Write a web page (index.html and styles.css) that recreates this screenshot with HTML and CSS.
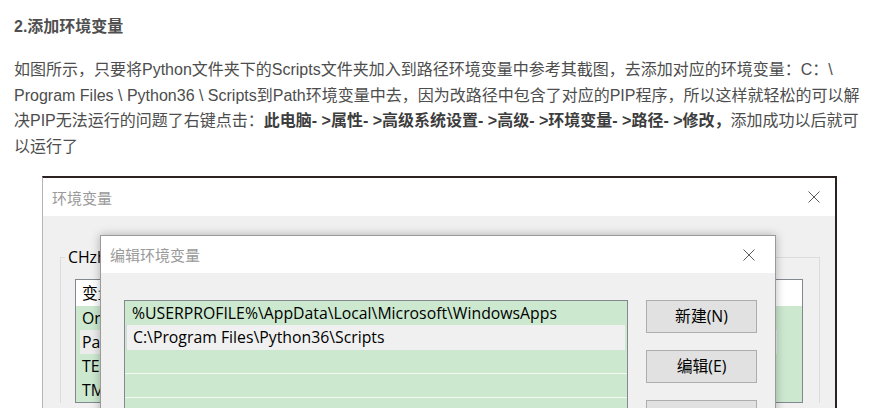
FILE: index.html
```html
<!DOCTYPE html>
<html lang="zh-CN">
<head>
<meta charset="utf-8">
<title>添加环境变量</title>
<link rel="stylesheet" href="styles.css">
</head>
<body>
<div class="page">
  <h3 class="title">2.添加环境变量</h3>
  <p class="para">如图所示，只要将Python文件夹下的Scripts文件夹加入到路径环境变量中参考其截图，去添加对应的环境变量：C：\ Program Files \ Python36 \ Scripts到Path环境变量中去，因为改路径中包含了对应的PIP程序，所以这样就轻松的可以解决PIP无法运行的问题了右键点击：<strong>此电脑- &gt;属性- &gt;高级系统设置- &gt;高级- &gt;环境变量- &gt;路径- &gt;修改，</strong>添加成功以后就可以运行了</p>
  <div class="shot">
    <div class="win">
      <div class="win-title">
        <span class="win-name">环境变量</span>
        <svg class="close close-outer" viewBox="0 0 12 12" width="12" height="12"><path d="M0.5 0.5L11.5 11.5M11.5 0.5L0.5 11.5" stroke="#5a5a5a" stroke-width="1" fill="none"/></svg>
      </div>
      <div class="win-body">
        <fieldset class="group">
          <legend class="group-label">CHzhang 的用户变量(U)</legend>
          <div class="vlist">
            <div class="vhead">变量</div>
            <div class="vrow">OneDrive</div>
            <div class="vrow"><span class="vsel">Path</span></div>
            <div class="vrow">TEMP</div>
            <div class="vrow">TMP</div>
          </div>
        </fieldset>
      </div>
      <div class="dlg">
        <div class="dlg-title">
          <span class="dlg-name">编辑环境变量</span>
          <svg class="close close-inner" viewBox="0 0 12 12" width="12" height="12"><path d="M0.5 0.5L11.5 11.5M11.5 0.5L0.5 11.5" stroke="#5a5a5a" stroke-width="1" fill="none"/></svg>
        </div>
        <div class="dlg-body">
          <div class="plist">
            <div class="prow">%USERPROFILE%\AppData\Local\Microsoft\WindowsApps</div>
            <div class="prow psel">C:\Program Files\Python36\Scripts</div>
            <div class="prow pempty"></div>
            <div class="prow pempty"></div>
            <div class="prow pempty"></div>
          </div>
          <div class="btns">
            <div class="btn">新建(N)</div>
            <div class="btn">编辑(E)</div>
            <div class="btn">浏览(B)...</div>
          </div>
        </div>
      </div>
    </div>
  </div>
</div>
</body>
</html>
```
FILE: styles.css
```css
html, body {
  margin: 0;
  background: #fff;
}
body {
  height: 408px;
  overflow: hidden;
}
.page {
  padding: 15px 0 0 14px;
  width: 852px;
}
.title {
  margin: 0;
  font: bold 16px/24px "Liberation Sans", "Noto Sans CJK SC", sans-serif;
  color: #4f4f4f;
}
.para {
  margin: 18px 0 0;
  font: 16px/25.6px "Liberation Sans", "Noto Sans CJK SC", sans-serif;
  color: #4d4d4d;
}
.para strong {
  color: #3d3d3d;
}
.shot {
  margin: 17px 0 0 28px;
  width: 795px;
  height: 240px;
  position: relative;
  font-family: "Open Sans", "Noto Sans CJK SC", sans-serif;
}
.win {
  box-sizing: border-box;
  height: 100%;
  border-top: 2px solid #2b2121;
  border-right: 2px solid #2b2121;
  border-left: 1px solid #b4b4b4;
  background: #f0f0f0;
}
.win-title {
  height: 38px;
  background: #fff;
  display: flex;
  align-items: center;
  justify-content: space-between;
  padding-left: 9px;
}
.win-name, .dlg-name {
  font-size: 15px;
  color: #9a9a9a;
  font-family: "Noto Sans CJK SC", sans-serif;
}
.close-outer {
  margin-right: 15px;
}
.win-body {
  padding: 31px 15px 0 17px;
}
.group {
  margin: 0;
  padding: 12px 16px 0 14px;
  border: 1px solid #dcdcdc;
  border-bottom: none;
}
.group-label {
  margin-left: -10px;
  padding: 0 3px;
  font-size: 15.8px;
  line-height: 20px;
  color: #000;
}
.vlist {
  border: 1px solid #828790;
  background: #cce8cf;
  font-size: 15.8px;
  color: #000;
}
.vhead {
  height: 26px;
  line-height: 26px;
  background: #fff;
  padding-left: 6px;
  font-family: "Noto Sans CJK SC", sans-serif;
}
.vrow {
  height: 24px;
  line-height: 24px;
  padding-left: 6px;
}
.vsel {
  display: block;
  margin-left: -2px;
  width: 695px;
  padding-left: 2px;
  background: #ececec;
}
.dlg {
  position: absolute;
  left: 58px;
  top: 59px;
  width: 676px;
  height: 200px;
  box-sizing: border-box;
  border: 1px solid #9a9a9a;
  background: #f0f0f0;
  box-shadow: 0 0 9px rgba(0, 0, 0, 0.28);
}
.dlg-title {
  height: 37px;
  background: #fff;
  display: flex;
  align-items: center;
  justify-content: space-between;
  padding-left: 9px;
}
.close-inner {
  margin-right: 20px;
}
.dlg-body {
  display: flex;
  gap: 18px;
  padding: 27px 0 0 23px;
}
.plist {
  width: 502px;
  height: 160px;
  border: 1px solid #828790;
  background: #cce8cf;
  font-size: 15.8px;
  color: #000;
}
.prow {
  height: 24px;
  line-height: 24px;
  padding-left: 7px;
  white-space: nowrap;
}
.psel {
  height: 25px;
  line-height: 25px;
  margin: 0 2px 0 1px;
  padding-left: 6px;
  background: #f0f0f0;
  border-left: 1px solid #d8d8d8;
}
.pempty {
  height: 23px;
  border-bottom: 1px solid #f4f9f4;
}
.btns {
  display: flex;
  flex-direction: column;
  gap: 17px;
}
.btn {
  width: 109px;
  height: 31px;
  line-height: 31px;
  text-align: center;
  background: #e1e1e1;
  border: 1px solid #adadad;
  font-size: 15.8px;
  color: #000;
}
```
